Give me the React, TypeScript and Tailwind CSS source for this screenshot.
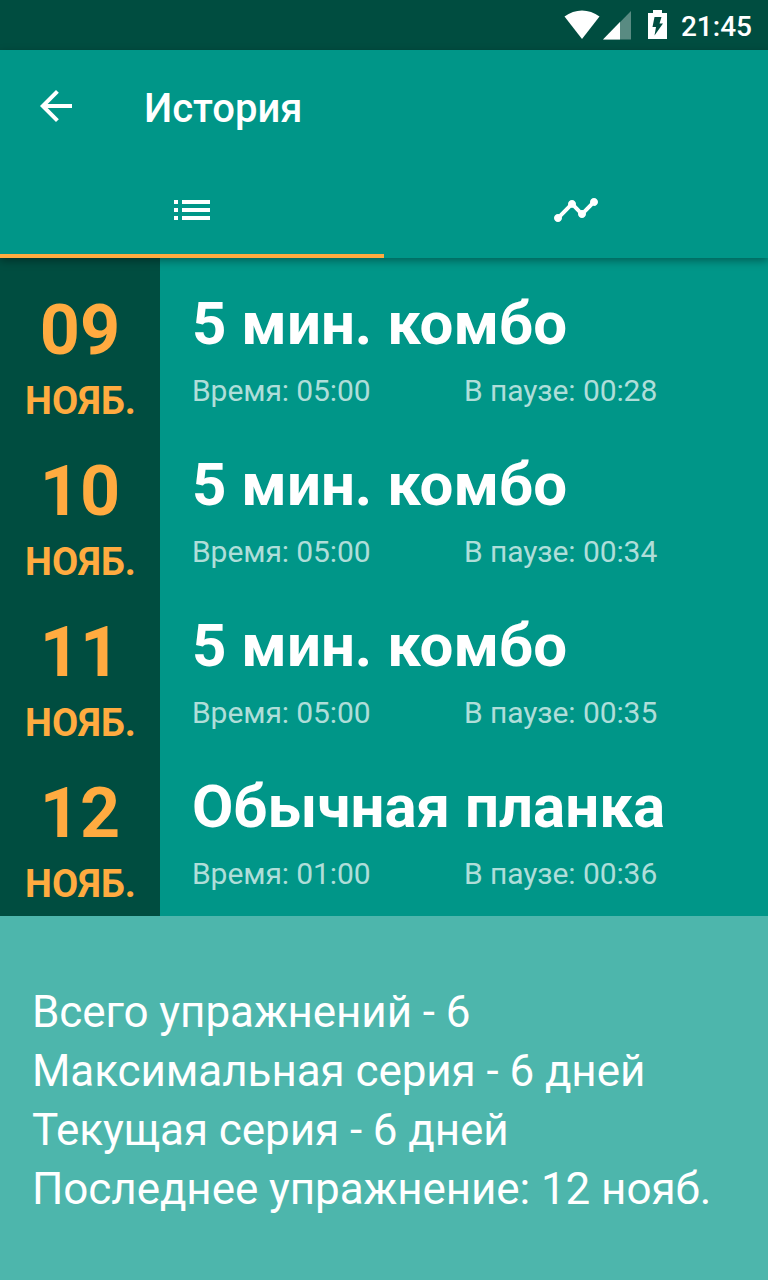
import React from 'react';

const workouts = [
  { day: '09', month: 'НОЯБ.', title: '5 мин. комбо', time: '05:00', pause: '00:28' },
  { day: '10', month: 'НОЯБ.', title: '5 мин. комбо', time: '05:00', pause: '00:34' },
  { day: '11', month: 'НОЯБ.', title: '5 мин. комбо', time: '05:00', pause: '00:35' },
  { day: '12', month: 'НОЯБ.', title: 'Обычная планка', time: '01:00', pause: '00:36' },
];

const summary = [
  'Всего упражнений - 6',
  'Максимальная серия - 6 дней',
  'Текущая серия - 6 дней',
  'Последнее упражнение: 12 нояб.',
];

const StatusBar: React.FC = () => (
  <div className="flex h-[50px] shrink-0 items-center justify-end bg-[#004d40] pr-4 text-white">
    <svg className="h-[50px] w-[110px]" viewBox="560 0 110 50" fill="currentColor">
      <path d="M564.5 16.5C575 8.5 589 8.5 599.5 16.5L582 39Z" />
      <path d="M631 11V39.5H603Z" opacity=".35" />
      <path d="M620 22V39.5H603Z" />
      <path fillRule="evenodd" d="M653 10h9v3h5v26h-19V13h5ZM654.5 17h7l-2 6.500h3.500l-8.500 12 1.500-8.500h-3.500Z" />
    </svg>
    <span className="ml-[11px] pt-[3px] text-[28px] font-medium leading-none">21:45</span>
  </div>
);

const Header: React.FC = () => (
  <header className="relative z-10 h-[208px] shrink-0 bg-[#009688] text-white shadow-[0_3px_8px_rgba(0,0,0,0.35)]">
    <div className="flex h-28 items-center pl-8">
      <button aria-label="Назад">
        <svg className="size-12" viewBox="0 0 24 24" fill="currentColor">
          <path d="M20 11H7.83l5.59-5.59L12 4l-8 8 8 8 1.41-1.41L7.83 13H20v-2z" />
        </svg>
      </button>
      <h1 className="ml-16 pt-1.5 text-[40px] font-medium leading-none">История</h1>
    </div>
    <nav className="grid h-24 grid-cols-2">
      <button className="flex items-center justify-center border-b-4 border-[#ffab40] pt-1">
        <svg className="size-12" viewBox="0 0 24 24" fill="currentColor">
          <path d="M3 13h2v-2H3v2zm0 4h2v-2H3v2zm0-8h2V7H3v2zm4 4h14v-2H7v2zm0 4h14v-2H7v2zM7 7v2h14V7H7z" />
        </svg>
      </button>
      <button className="flex items-center justify-center border-b-4 border-transparent pt-1">
        <svg className="size-12" viewBox="0 0 24 24" fill="currentColor">
          <path d="M23 8c0 1.1-.9 2-2 2-.18 0-.35-.02-.51-.07l-3.56 3.55c.05.16.07.34.07.52 0 1.1-.9 2-2 2s-2-.9-2-2c0-.18.02-.36.07-.52l-2.55-2.55c-.16.05-.34.07-.52.07s-.36-.02-.52-.07l-4.55 4.56c.05.16.07.33.07.51 0 1.1-.9 2-2 2s-2-.9-2-2 .9-2 2-2c.18 0 .35.02.51.07l4.56-4.55C8.02 9.36 8 9.18 8 9c0-1.1.9-2 2-2s2 .9 2 2c0 .18-.02.36-.07.52l2.55 2.55c.16-.05.34-.07.52-.07s.36.02.52.07l3.55-3.56C19.02 8.35 19 8.18 19 8c0-1.1.9-2 2-2s2 .9 2 2z" />
        </svg>
      </button>
    </nav>
  </header>
);

const App: React.FC = () => {
  return (
    <div className="flex h-[1280px] w-[768px] flex-col overflow-hidden bg-[#009688] font-['Roboto',sans-serif]">
      <StatusBar />
      <Header />
      <main className="h-[658px] shrink-0">
        {workouts.map((item) => (
          <div key={item.day} className="flex h-[161px] last:h-[175px]">
            <div className="flex w-40 flex-col items-center bg-[#004d40] pt-[31px] font-bold text-[#ffab40]">
              <span className="text-[70px] leading-[82px]">{item.day}</span>
              <span className="pl-px text-[38px] leading-[60px] tracking-[0.1px]">{item.month}</span>
            </div>
            <div className="flex-1 pl-8 pt-[31px]">
              <h2 className="text-[60px] font-bold leading-[70px] text-white">{item.title}</h2>
              <div className="flex pt-[14px] text-[30px] leading-[36px] tracking-[-0.08px] text-white/70">
                <span className="w-[272px]">Время: {item.time}</span>
                <span>В паузе: {item.pause}</span>
              </div>
            </div>
          </div>
        ))}
      </main>
      <footer className="flex-1 bg-[#4db6ac] pl-8 pt-[67px] text-[44px] leading-[59px] tracking-[-0.08px] text-white">
        {summary.map((line) => (
          <p key={line} className="whitespace-nowrap">{line}</p>
        ))}
      </footer>
    </div>
  );
};

export default App;
